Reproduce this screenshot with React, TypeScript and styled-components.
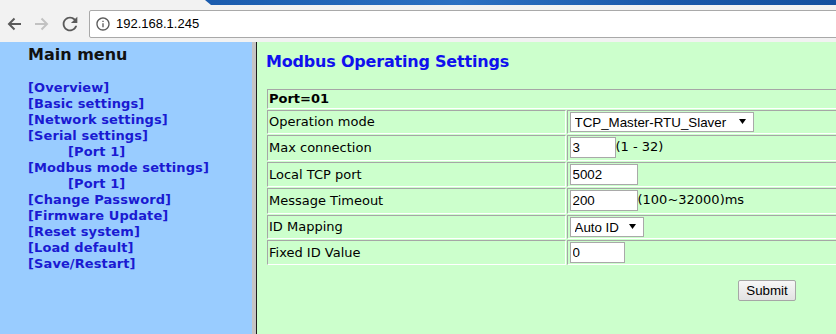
import React from 'react';
import styled, { createGlobalStyle } from 'styled-components';

const GlobalStyle = createGlobalStyle`
  html, body {
    margin: 0;
    padding: 0;
    width: 836px;
    height: 334px;
    overflow: hidden;
    background: #f2f2f2;
  }
`;

const Window = styled.div`
  width: 836px;
  height: 334px;
  display: flex;
  flex-direction: column;
  overflow: hidden;
`;

const TabStrip = styled.div`
  height: 5px;
  background: linear-gradient(90deg, #0f4c9e 0%, #1d5fb1 30%, #2c70c2 55%, #1a58a9 80%, #14509f 100%);
`;

const ActiveTab = styled.div`
  width: 212px;
  height: 100%;
  background: #f2f2f2;
  clip-path: polygon(0 0, 205px 0, 211px 100%, 0 100%);
`;

const Toolbar = styled.div`
  height: 37px;
  display: flex;
  align-items: flex-start;
  padding-top: 5px;
  box-sizing: border-box;
  background: #f2f2f2;
`;

const NavButton = styled.div`
  width: 28px;
  height: 28px;
  display: flex;
  align-items: center;
  justify-content: center;
  flex: none;
`;

const AddressBox = styled.div`
  margin-left: 5px;
  flex: 1;
  height: 28px;
  margin-right: -6px;
  box-sizing: border-box;
  border: 1px solid #a9a9a9;
  border-radius: 2px;
  background: #fff;
  display: flex;
  align-items: center;
  padding-left: 5px;
`;

const Url = styled.span`
  margin-left: 5px;
  font: 13px/16px "Liberation Sans", Arial, sans-serif;
  color: #000;
`;

const Frames = styled.div`
  flex: 1;
  display: flex;
  min-height: 0;
`;

const MenuFrame = styled.div`
  width: 252px;
  flex: none;
  background: #99ccff;
  box-sizing: border-box;
  padding: 3px 0 0 28px;
  font-family: "DejaVu Sans", Verdana, sans-serif;
`;

const MenuTitle = styled.div`
  margin: 0 0 16px;
  font-weight: bold;
  font-size: 16px;
  line-height: 19px;
  color: #111;
`;

const MenuLink = styled.a<{ $sub?: boolean }>`
  display: block;
  padding-left: ${(p) => (p.$sub ? '40px' : '0')};
  font-weight: bold;
  font-size: 13px;
  line-height: 16px;
  letter-spacing: 0.1px;
  color: #1a1ad2;
  text-decoration: none;
  white-space: nowrap;
`;

const FrameBorder = styled.div`
  width: 4px;
  flex: none;
  background: #c4c4c4;
  border-right: 1px solid #1c1c1c;
`;

const ContentFrame = styled.div`
  flex: 1;
  background: #ccffcc;
  padding: 10px 0 0 9px;
  font-family: "DejaVu Sans", Verdana, sans-serif;
  overflow: hidden;
`;

const PageTitle = styled.div`
  margin: 0;
  font-weight: bold;
  font-size: 16px;
  line-height: 19px;
  letter-spacing: -0.2px;
  color: #1010ee;
  white-space: nowrap;
`;

const SettingsTable = styled.table`
  margin-top: 17px;
  width: 600px;
  table-layout: fixed;
  border-collapse: separate;
  border-spacing: 1px;
  font-size: 13px;
  line-height: 16px;
  color: #000;
`;

const Cell = styled.td<{ $head?: boolean; $label?: boolean; $tall?: boolean }>`
  padding: 1px 1px ${(p) => (p.$tall ? '2px' : '1px')};
  padding-left: ${(p) => (p.$label || p.$head ? '1px' : '2px')};
  width: ${(p) => (p.$label ? '294px' : 'auto')};
  border-top: 1px solid #a6a6a6;
  border-left: 1px solid #a6a6a6;
  border-bottom: 1px solid #ffffff;
  border-right: 1px solid #ffffff;
  font-weight: ${(p) => (p.$head ? 'bold' : 'normal')};
  vertical-align: middle;
  white-space: nowrap;
`;

const TextInput = styled.input<{ $w: number }>`
  width: ${(p) => p.$w}px;
  height: 21px;
  box-sizing: border-box;
  margin: 0;
  padding: 1px 2px;
  border: 1px solid #a9a9a9;
  background: #fff;
  font: 13.33px "Liberation Sans", Arial, sans-serif;
  color: #000;
  vertical-align: middle;
  outline: none;
`;

const SelectBox = styled.span`
  position: relative;
  display: inline-block;
  vertical-align: middle;
`;

const Select = styled.select<{ $w: number }>`
  appearance: none;
  width: ${(p) => p.$w}px;
  height: 20px;
  box-sizing: border-box;
  margin: 0;
  padding: 0 0 0 4px;
  border: 1px solid #a9a9a9;
  border-radius: 0;
  background: #fff;
  font: 13.33px "Liberation Sans", Arial, sans-serif;
  color: #000;
  display: block;
  outline: none;
`;

const Arrow = styled.svg`
  position: absolute;
  right: 8px;
  top: 7px;
  pointer-events: none;
`;

const ButtonRow = styled.div`
  padding: 14px 0 0 472px;
`;

const SubmitButton = styled.button`
  width: 58px;
  height: 21px;
  margin: 0;
  padding: 0;
  border: 1px solid #a6a6a6;
  border-radius: 2px;
  background: linear-gradient(#f7f7f7, #e2e2e2);
  font: 13.33px "Liberation Sans", Arial, sans-serif;
  color: #000;
`;

const menu = [
  { label: '[Overview]' },
  { label: '[Basic settings]' },
  { label: '[Network settings]' },
  { label: '[Serial settings]' },
  { label: '[Port 1]', sub: true },
  { label: '[Modbus mode settings]' },
  { label: '[Port 1]', sub: true },
  { label: '[Change Password]' },
  { label: '[Firmware Update]' },
  { label: '[Reset system]' },
  { label: '[Load default]' },
  { label: '[Save/Restart]' },
];

const DropArrow = () => (
  <Arrow width="7" height="5" viewBox="0 0 7 5">
    <polygon points="0,0 7,0 3.5,5" fill="#000" />
  </Arrow>
);

const ArrowIcon = ({ color, flip }: { color: string; flip?: boolean }) => (
  <svg width="16" height="16" viewBox="0 0 16 16" style={flip ? { transform: 'scaleX(-1)' } : undefined}>
    <path d="M15 8H3M8.5 2.5L3 8l5.5 5.5" fill="none" stroke={color} strokeWidth="2" />
  </svg>
);

const App: React.FC = () => {
  return (
    <Window>
      <GlobalStyle />
      <TabStrip>
        <ActiveTab />
      </TabStrip>
      <Toolbar>
        <NavButton>
          <ArrowIcon color="#5a5a5a" />
        </NavButton>
        <NavButton>
          <ArrowIcon color="#c2c2c2" flip />
        </NavButton>
        <NavButton>
          <svg width="22" height="22" viewBox="0 0 24 24">
            <path
              fill="#5a5a5a"
              d="M17.65 6.35C16.2 4.9 14.21 4 12 4c-4.42 0-7.99 3.58-7.99 8s3.57 8 7.99 8c3.73 0 6.84-2.55 7.73-6h-2.08c-.82 2.33-3.04 4-5.65 4-3.31 0-6-2.69-6-6s2.69-6 6-6c1.66 0 3.14.69 4.22 1.78L13 11h7V4l-2.35 2.35z"
            />
          </svg>
        </NavButton>
        <AddressBox>
          <svg width="16" height="16" viewBox="0 0 24 24">
            <path
              fill="#5a5a5a"
              d="M11 17h2v-6h-2v6zm1-15C6.48 2 2 6.48 2 12s4.48 10 10 10 10-4.48 10-10S17.52 2 12 2zm0 18c-4.41 0-8-3.59-8-8s3.59-8 8-8 8 3.59 8 8-3.59 8-8 8zM11 9h2V7h-2v2z"
            />
          </svg>
          <Url>192.168.1.245</Url>
        </AddressBox>
      </Toolbar>
      <Frames>
        <MenuFrame>
          <MenuTitle>Main menu</MenuTitle>
          {menu.map((m, i) => (
            <MenuLink key={i} href="#" $sub={m.sub}>
              {m.label}
            </MenuLink>
          ))}
        </MenuFrame>
        <FrameBorder />
        <ContentFrame>
          <PageTitle>Modbus Operating Settings</PageTitle>
          <SettingsTable>
            <tbody>
              <tr>
                <Cell $head colSpan={2}>Port=01</Cell>
              </tr>
              <tr>
                <Cell $label>Operation mode</Cell>
                <Cell>
                  <SelectBox>
                    <Select $w={184} defaultValue="tcp">
                      <option value="tcp">TCP_Master-RTU_Slaver</option>
                    </Select>
                    <DropArrow />
                  </SelectBox>
                </Cell>
              </tr>
              <tr>
                <Cell $label $tall>Max connection</Cell>
                <Cell $tall>
                  <TextInput $w={46} defaultValue="3" />(1 - 32)
                </Cell>
              </tr>
              <tr>
                <Cell $label>Local TCP port</Cell>
                <Cell>
                  <TextInput $w={68} defaultValue="5002" />
                </Cell>
              </tr>
              <tr>
                <Cell $label $tall>Message Timeout</Cell>
                <Cell $tall>
                  <TextInput $w={68} defaultValue="200" />(100~32000)ms
                </Cell>
              </tr>
              <tr>
                <Cell $label>ID Mapping</Cell>
                <Cell>
                  <SelectBox>
                    <Select $w={74} defaultValue="auto">
                      <option value="auto">Auto ID</option>
                    </Select>
                    <DropArrow />
                  </SelectBox>
                </Cell>
              </tr>
              <tr>
                <Cell $label>Fixed ID Value</Cell>
                <Cell>
                  <TextInput $w={55} defaultValue="0" />
                </Cell>
              </tr>
            </tbody>
          </SettingsTable>
          <ButtonRow>
            <SubmitButton>Submit</SubmitButton>
          </ButtonRow>
        </ContentFrame>
      </Frames>
    </Window>
  );
};

export default App;
